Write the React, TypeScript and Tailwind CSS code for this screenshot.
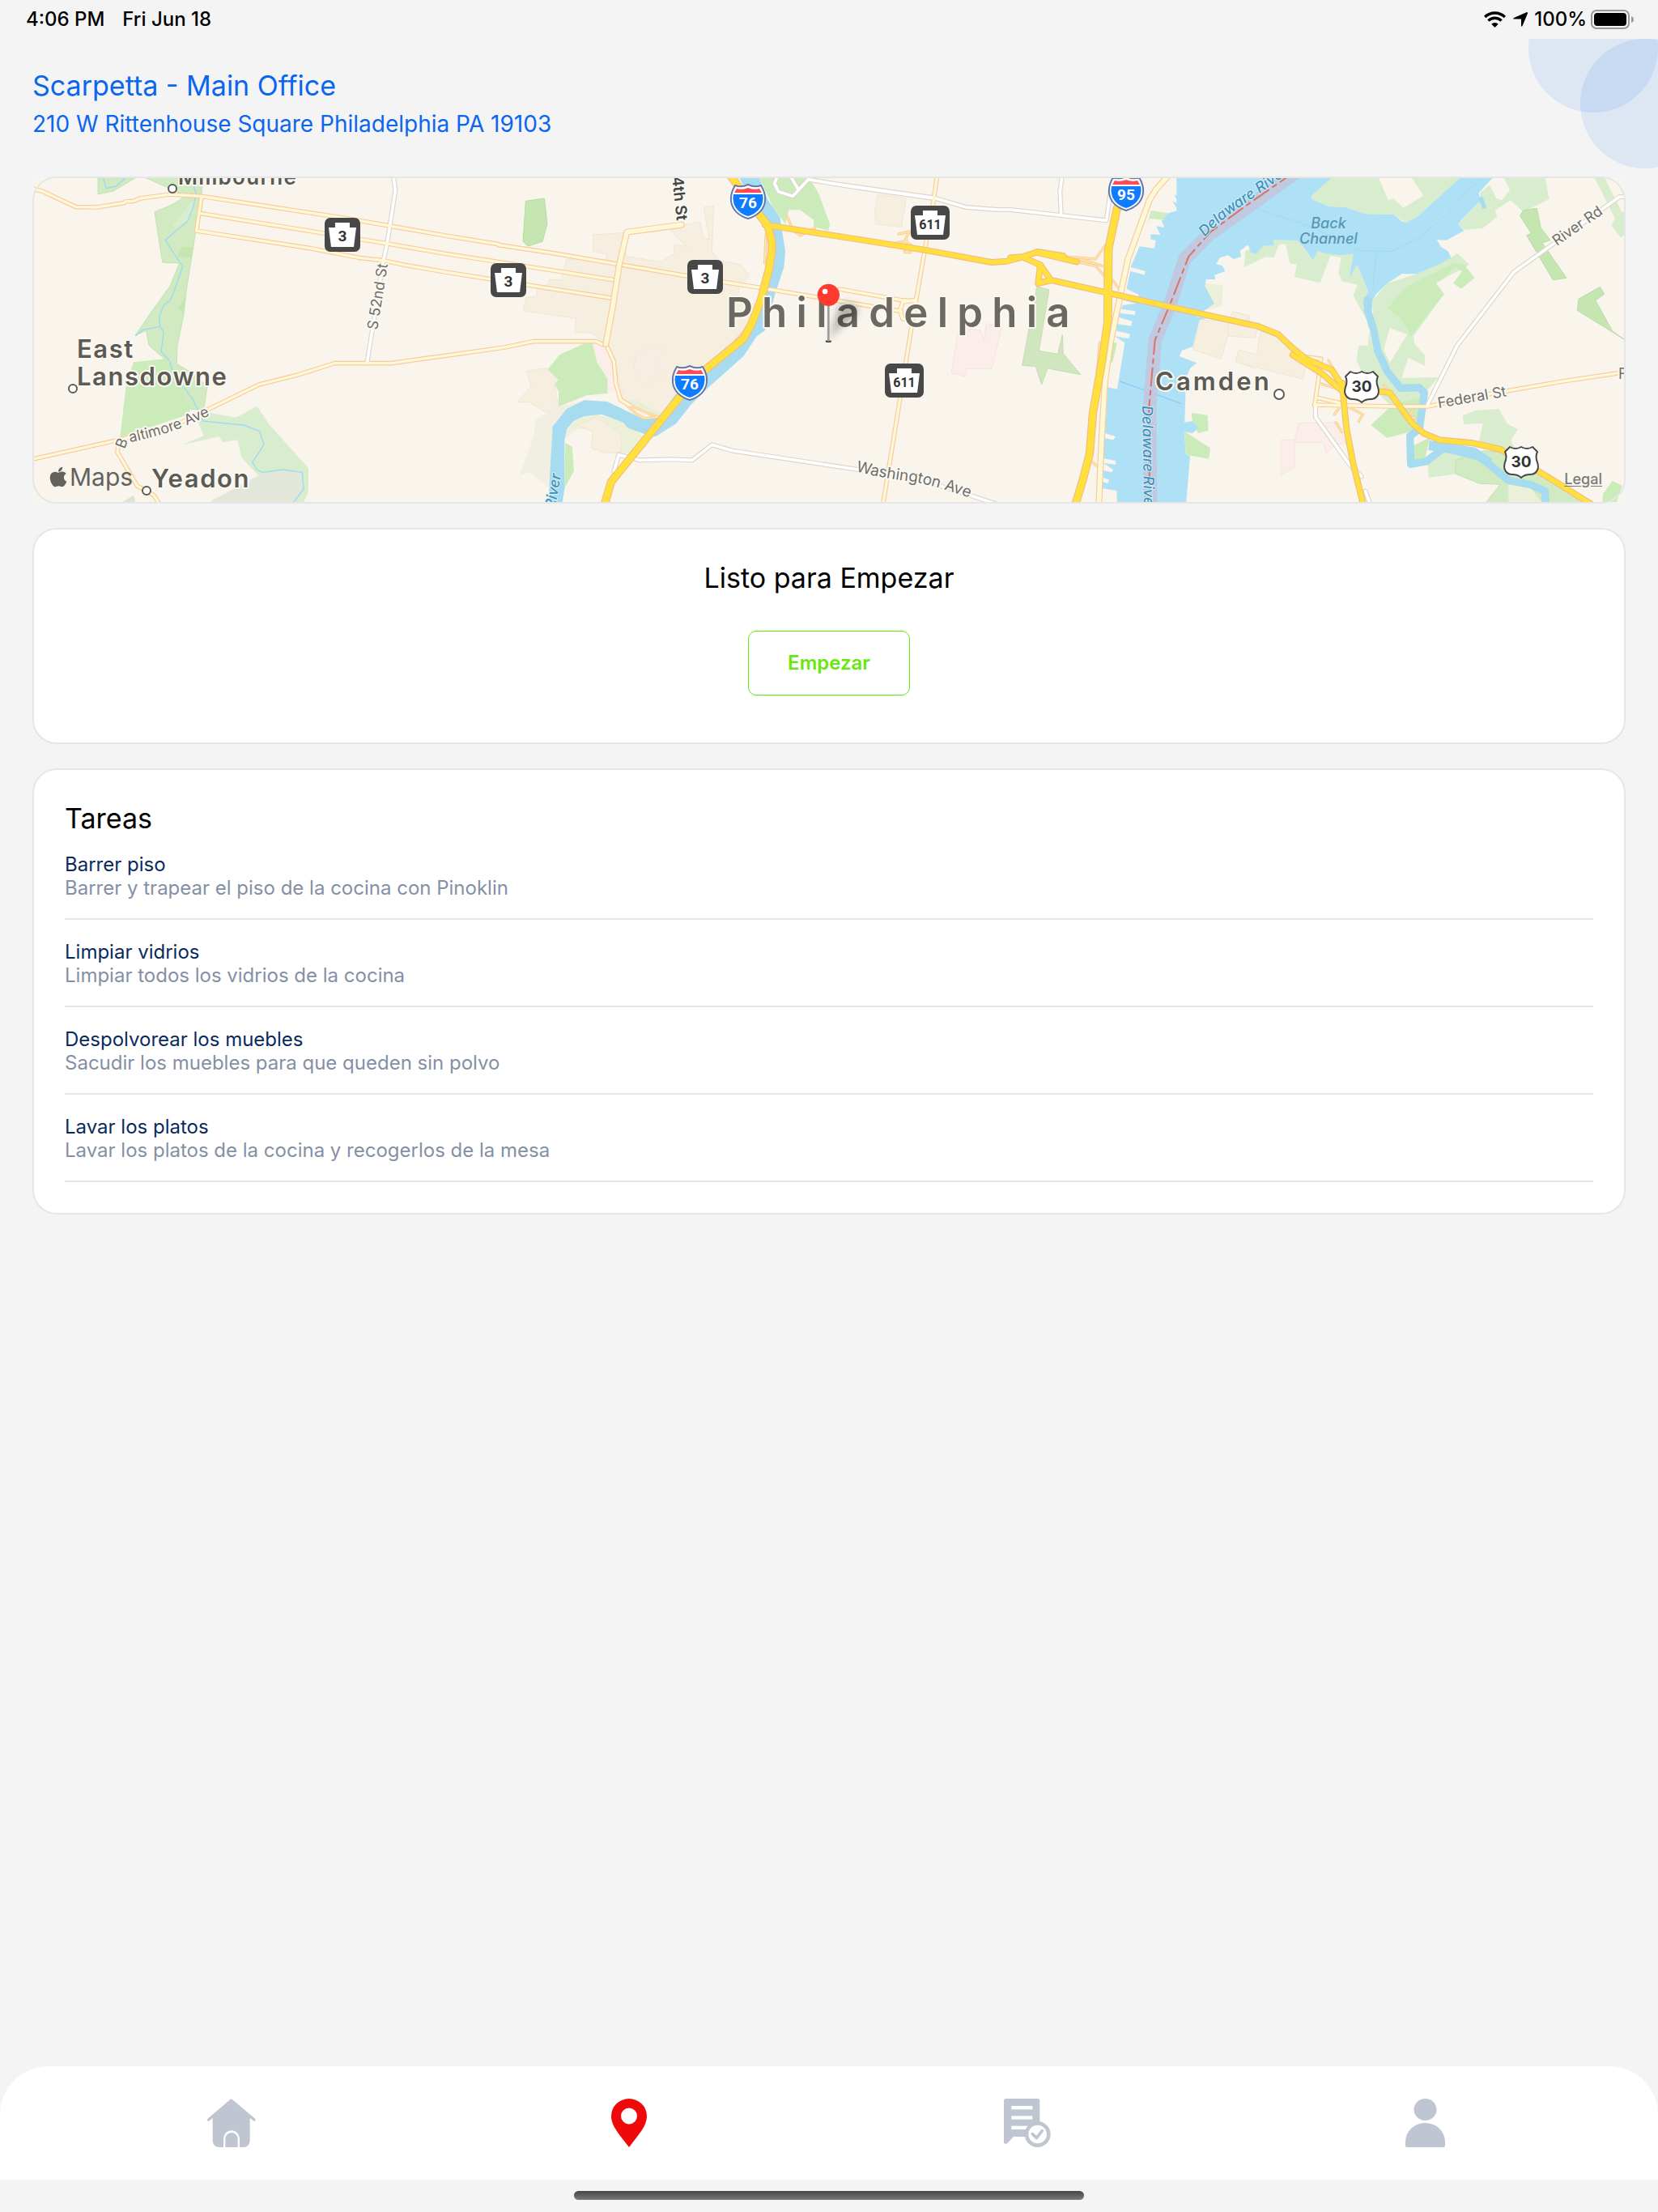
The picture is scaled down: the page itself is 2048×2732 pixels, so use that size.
import type { ReactNode } from "react";
import { FaApple } from "react-icons/fa";

/* ---------- Map data (tile-local coordinates, three units per pixel) ---------- */

const TILE = { a: -36, b: 1494, c: 2994, d: 4434 } as const;
type TileKey = keyof typeof TILE;
type Area = [TileKey, string, string, string?];

const PARK = "#cbebba";
const PARK_DARK = "#c6e6b1";
const PARK_LIGHT = "#d8edcd";
const WOOD = "#d2eac1";
const CAMPUS = "#f6efdf";
const CAMPUS_EDGE = "#efe6d4";
const HOSPITAL = "#fbedea";
const LAND = "#f9f5ed";
const WATER = "#aee1f6";
const CREEK = "#a6dbf0";

const areas: Area[] = [
  ["a", WOOD, "273,30 410,30 330,78 273,90", "#c3e2b4"],
  ["a", WOOD, "430,20 665,20 655,100 635,230 600,450 590,540 567,650 565,718 615,748 678,800 665,890 612,885 545,740 520,700 462,650 452,595 412,612 475,520 540,430 575,345 512,342 483,155 545,130 600,95", "#c3e2b4"],
  ["a", PARK_LIGHT, "548,205 610,130 635,105 625,160 600,190 565,215"],
  ["a", PARK_DARK, "585,285 625,285 620,325 565,322"],
  ["a", PARK_DARK, "598,470 592,530 568,510"],
  ["a", PARK, "405,712 520,700 550,740 615,885 610,905 355,990 378,790"],
  ["a", PARK_LIGHT, "665,895 785,917 862,875 905,940 1053,1105 1053,1190 1035,1232 700,1232 870,1135 805,1065 790,1000 735,1008 722,988 585,1018 665,985 645,935"],
  ["a", "#e3e7da", "695,1225 880,1125 960,1112 1028,1120 1038,1180 1000,1232 690,1232"],
  ["a", "#dbe5d0", "360,1232 405,1205 413,1232"],
  ["b", PARK_DARK, "328,115 397,105 408,200 390,265 337,282 318,265", "#b7dba4"],
  ["b", CAMPUS, "578,240 690,232 700,320 830,340 878,310 880,275 925,283 862,225 905,205 973,192 988,255 1008,257 988,138 1025,132 1018,300 1045,335 1125,350 1157,393 1120,435 1110,490 1200,500 1160,570 1060,665 990,745 880,850 820,910 690,850 660,720 625,645 575,605 510,600 515,550 318,522 330,472 370,470 372,430 412,425 415,405 460,408 480,330 630,330 628,310 578,303", CAMPUS_EDGE],
  ["b", "#f7eee1", "810,648 845,657 815,715 840,765 765,805 728,730 740,680", "#f4e8da"],
  ["b", CAMPUS, "333,745 403,733 450,777 435,795 450,875 405,900 343,860 298,860 348,800", CAMPUS_EDGE],
  ["b", PARK, "410,738 453,685 545,643 575,643 595,715 632,775 632,828 555,835 450,877 450,820 435,795 450,777"],
  ["b", HOSPITAL, "577,645 625,650 655,705 662,822 632,825 632,775 592,712"],
  ["b", "#f1efe1", "365,925 450,877 560,850 640,870 480,990 440,1000 410,1175 345,1120 305,1133 358,985"],
  ["b", "#ecf0d8", "475,975 520,930 590,905 680,930 765,985 710,1050 620,1048 575,1030 580,970 520,955"],
  ["b", CAMPUS, "520,945 590,915 685,980 680,1045 620,1048 570,1030 578,968", CAMPUS_EDGE],
  ["b", "#e9efd6", "690,855 740,853 830,905 800,915"],
  ["b", PARK, "475,1010 500,1025 507,1115 472,1180"],
  ["b", PARK, "1190,20 1340,20 1385,40 1415,90 1455,200 1450,225 1395,210 1395,185 1345,148 1303,148 1290,200 1240,130"],
  ["c", CAMPUS, "133,90 238,105 220,212 125,200 122,150", CAMPUS_EDGE],
  ["c", HOSPITAL, "430,600 445,585 515,595 527,632 535,568 592,585 555,737 463,737 458,765 405,752", "#f8e2df"],
  ["c", "#d0e6be", "722,432 768,443 730,670 800,682 817,610 820,680 885,758 762,735 740,795 718,728 668,724", "#c6ddb4"],
  ["c", WOOD, "1145,150 1210,160 1195,185 1140,180 1130,205"],
  ["c", PARK, "1000,640 1020,640 1003,712 988,712"],
  ["c", PARK, "1295,900 1355,908 1358,965 1320,975 1300,940"],
  ["c", PARK, "1268,968 1365,1030 1360,1070 1276,1055"],
  ["c", "#ecf0d8", "1345,420 1412,425 1408,505 1345,520"],
  ["c", CAMPUS, "1325,555 1440,560 1450,525 1510,540 1510,620 1430,615 1405,700 1300,665", CAMPUS_EDGE],
  ["c", CAMPUS, "1470,665 1540,690 1530,735 1458,710", CAMPUS_EDGE],
  ["d", PARK_LIGHT, "300,95 385,20 545,20 585,112 605,105 640,140 715,95 665,20 860,20 690,175 650,195 605,165 500,163 425,138 365,135 300,108"],
  ["d", PARK_LIGHT, "925,85 960,55 985,105 1005,112 1035,75 1010,20 1165,20 1180,108 1085,155 1038,112 980,150 988,173 935,215 865,222 843,200 925,115"],
  ["d", PARK_LIGHT, "55,300 150,258 250,262 305,335 325,300 455,310 440,400 470,350 510,450 490,490 530,670 600,770 640,797 730,815 740,790 770,768 700,850 590,870 500,780 467,705 475,650 510,650 515,575 455,465 470,425 412,412 400,380 410,325 370,318 333,418 237,397 245,350 220,345 205,275 180,275 160,325 130,322 50,360"],
  ["d", PARK_LIGHT, "525,485 580,420 690,385 818,325 840,308 885,350 760,420 790,460 678,615 682,645 720,685 720,725 658,695 635,770 770,768 730,815 640,800 590,745 555,660 530,560"],
  ["d", LAND, "590,585 655,610 590,715 568,665"],
  ["d", PARK, "582,510 655,430 830,345 865,350 905,400 855,440 825,420 858,375 835,360 762,420 792,460 668,615 630,550"],
  ["d", PARK, "520,945 600,870 710,840 700,960 580,993"],
  ["d", PARK, "680,1020 740,990 720,1070 672,1080"],
  ["d", PARK_DARK, "1085,150 1135,142 1150,215 1185,260 1155,270 1245,400 1195,407 1097,242 1115,235 1073,170", "#b7dba4"],
  ["d", PARK_DARK, "1290,478 1370,433 1385,460 1352,483 1415,597 1460,628 1285,520", "#b7dba4"],
  ["d", PARK_LIGHT, "1345,20 1382,20 1450,155 1460,155 1460,240 1445,250 1412,205 1425,180"],
  ["d", PARK_LIGHT, "860,910 910,890 995,885 1025,940 1065,960 1040,1000 1060,1050 920,1010 935,938 865,942"],
  ["d", PARK_LIGHT, "730,1085 790,1040 870,1065 840,1125 735,1140"],
  ["d", WOOD, "835,1075 940,1040 1060,1050 1330,1240 940,1240 1000,1165 925,1162 832,1125", "#c6ddb4"],
  ["d", "#ecf0d8", "1030,1165 1110,1175 1160,1240 1030,1240"],
  ["d", PARK, "1380,1200 1415,1152 1452,1170 1430,1232 1378,1232"],
  ["d", HOSPITAL, "187,1000 238,1000 252,938 400,935 425,1010 385,1020 355,1050 345,1010 237,1010 237,1102 187,1130", "#f8e2df"],
  ["d", CAMPUS, "110,600 175,605 280,720 268,775 20,712 30,667 98,683", CAMPUS_EDGE],
  ["d", CAMPUS, "-10,560 8,525 65,540 60,565 98,590 92,622 -10,615", CAMPUS_EDGE],
];

const water: Area[] = [
  ["b", CREEK, "1115,20 1190,20 1225,110 1270,175 1290,300 1285,360 1255,450 1215,595 1185,615 1135,690 1000,810 940,870 885,940 810,987 785,985 705,955 690,935 610,905 545,912 505,930 480,960 472,1000 472,1180 463,1240 412,1240 418,1120 428,950 480,885 545,853 630,858 765,923 820,920 885,830 1000,740 1140,630 1190,500 1240,350 1240,270 1200,180"],
  ["c", WATER, "1600,20 1335,20 1285,80 1245,60 1258,105 1230,90 1252,130 1225,115 1245,150 1210,160 1185,190 1195,213 1165,208 1180,240 1143,238 1145,258 1163,260 1158,290 1103,283 1070,360 1125,375 1120,388 1068,375 1055,440 1100,462 1095,475 1040,465 1035,480 1090,495 1040,500 1035,515 1088,523 1085,537 1030,530 1025,545 1075,560 1072,578 1020,570 1015,595 1068,608 1062,625 1010,615 1048,640 1020,812 985,805 975,975 1015,988 1005,1000 968,992 968,1068 1015,1078 1015,1092 968,1085 1005,1110 1000,1120 966,1112 968,1140 990,1148 985,1162 966,1155 965,1180 1018,1188 1020,1240 1275,1240 1290,1060 1275,1055 1268,970 1300,975 1322,955 1300,930 1270,935 1275,770 1290,735 1315,715 1250,690 1260,668 1300,655 1325,555 1355,550 1310,543 1350,515 1380,495 1345,430 1350,405 1385,405 1380,390 1420,375 1410,355 1387,348 1400,325 1450,310 1455,330 1480,320 1475,300 1500,280 1600,280"],
  ["d", WATER, "-200,20 385,20 300,95 300,108 365,135 425,138 500,163 605,165 635,190 650,195 690,175 860,20 980,20 920,85 925,115 860,180 843,200 865,225 800,260 765,258 780,285 805,300 818,325 760,355 690,385 635,385 580,420 540,460 525,485 525,520 495,510 490,490 510,450 470,350 440,400 455,310 410,315 355,310 325,300 305,335 285,305 250,262 150,258 120,283 95,310 75,305 65,275 30,300 30,315 10,330 -10,315 -40,280 -200,280"],
];

const streams: [TileKey, string, number, string][] = [
  ["a", "290,20 303,68 340,60 378,28", 4, "#9ad9f5"],
  ["a", "628,60 637,90 625,140 605,190 522,260 587,357 555,450 540,482 517,500 500,545 503,580 517,600 507,672 540,710 550,750 625,850 662,930 812,945 872,968 888,1018 845,1083 862,1110 884,1120 958,1110 1030,1120 1035,1182 997,1232", 4, "#9ad9f5"],
  ["a", "412,615 440,592 503,580", 4, "#9ad9f5"],
  ["d", "508,470 508,520 530,590 545,670 580,745 630,808 700,806 718,825 700,960 665,985 668,1090 725,1080 790,1030 870,1050 930,1065 970,1100 1030,1150 1110,1165 1165,1190 1168,1240", 28, CREEK],
  ["d", "735,1020 900,1045 960,1085", 36, CREEK],
  ["d", "925,100 942,142", 16, CREEK],
  ["d", "80,138 300,210 480,298 595,302 700,250 800,165 870,85 940,25", 2, "#9dd5ec"],
  ["d", "540,300 527,450", 2, "#9dd5ec"],
  ["c", "1030,783 1257,865", 4, "#8ccaf5"],
];

type RoadKind = "ramp" | "street" | "avenue" | "highway" | "freeway";
const roadStyle: Record<RoadKind, { core: string; edge: string; w: number; e: number }> = {
  street: { core: "#ffffff", edge: "#dcd6cc", w: 11, e: 18 },
  ramp: { core: "#ffe7a8", edge: "#f8cf9c", w: 4, e: 10 },
  avenue: { core: "#fef9d4", edge: "#f7caa2", w: 10, e: 17 },
  highway: { core: "#ffe03d", edge: "#f5bb84", w: 17, e: 24 },
  freeway: { core: "#ffe03d", edge: "#f5bb84", w: 24, e: 31 },
};

const roads: [TileKey, RoadKind, string][] = [
  ["a", "street", "1368,20 1375,75 1345,270 1330,340 1270,715"],
  ["b", "street", "1262,20 1250,50 1265,80 1318,97 1375,35 1560,65 1840,105"],
  ["b", "street", "1308,20 1340,75"],
  ["c", "street", "0,55 340,103 460,138 580,147 625,147 980,187 995,80"],
  ["c", "street", "816,20 808,80 812,160"],
  ["b", "street", "655,1118 673,1055 750,1075 870,1072 945,1075 1018,1018 1095,1040 1560,1110 1570,1112"],
  ["c", "street", "300,1150 465,1202 580,1240"],
  ["d", "street", "315,870 315,915 440,1090 485,1135"],
  ["d", "street", "500,1190 518,1240"],
  ["d", "street", "730,870 840,650 1050,378 1440,100 1475,97"],
  ["b", "ramp", "700,870 740,905 770,920 820,915"],
  ["b", "ramp", "715,872 790,905 820,915"],
  ["b", "ramp", "1295,168 1320,225 1345,243 1400,215"],
  ["b", "ramp", "1218,240 1214,345"],
  ["b", "ramp", "1165,570 1090,650"],
  ["c", "ramp", "210,237 250,228 233,262 260,280"],
  ["c", "ramp", "200,270 240,262 232,305 255,305"],
  ["c", "ramp", "820,320 940,330 975,280"],
  ["c", "ramp", "870,340 940,355 970,390"],
  ["c", "ramp", "830,325 900,335 965,355"],
  ["c", "ramp", "985,385 1030,445"],
  ["c", "ramp", "955,640 945,760 925,930"],
  ["c", "ramp", "925,1080 950,1100"],
  ["d", "ramp", "363,705 400,770"],
  ["d", "ramp", "412,870 385,905"],
  ["d", "ramp", "440,880 490,905 475,932"],
  ["d", "ramp", "390,935 412,970"],
  ["d", "ramp", "675,890 660,915 685,920"],
  ["d", "ramp", "568,797 590,825"],
  ["d", "ramp", "330,790 410,815"],
  ["a", "avenue", "30,70 66,78 125,106 192,137 268,138 370,122 375,117 405,115 430,105 540,90 655,97 1200,180 1560,243 1758,275"],
  ["b", "avenue", "228,278 410,305 675,350 765,365 980,402 1190,435 1340,460 1560,497 1720,523"],
  ["b", "avenue", "1490,441 1720,482 1770,486"],
  ["a", "avenue", "650,160 1330,270 1560,310 2190,408"],
  ["a", "avenue", "638,225 1060,290 1240,325 1330,335 1410,352 1560,378 2180,475"],
  ["a", "avenue", "657,97 638,225"],
  ["a", "avenue", "36,1070 350,1000 560,945 665,895 870,795 1010,760 1150,716 1360,716 1470,700 1560,688 1780,657 1885,635 2120,635 2140,645 2155,648"],
  ["a", "avenue", "350,1000 345,1045 418,1170 480,1205 503,1240"],
  ["b", "avenue", "625,645 655,710 662,790 680,852 715,872"],
  ["c", "avenue", "353,20 340,110 275,480 225,490 215,520 225,552 262,555"],
  ["c", "avenue", "275,485 262,555 210,880 152,1240"],
  ["d", "avenue", "310,870 600,876 730,876 960,830 1230,783 1440,752 1490,746"],
  ["d", "avenue", "325,845 415,865"],
  ["d", "avenue", "275,692 335,700 325,780 312,870"],
];

const wideAvenues: [TileKey, string][] = [
  ["b", "905,203 703,230 675,350 650,510 625,645"],
  ["c", "1215,15 1165,70 1140,110 1060,330 1020,520 995,640 975,780 962,1000 952,1240"],
];

const majorRoads: [TileKey, RoadKind, string][] = [
  ["b", "highway", "1215,203 1560,257 1800,295 2055,342 2110,338 2170,322 2235,352 2275,408 2485,455 2720,508 3010,572 3040,578 3115,608 3170,660 3220,700 3315,740 3355,800"],
  ["c", "highway", "625,325 670,322 725,303 820,318"],
  ["c", "highway", "720,305 870,340"],
  ["c", "highway", "735,352 727,420 775,408"],
  ["d", "highway", "230,685 340,755 415,820"],
  ["d", "highway", "415,790 420,860 430,960 455,1090 492,1240"],
  ["d", "highway", "415,800 490,812 590,825 670,935 715,975 775,1000 900,1012 1000,1035 1080,1080 1180,1140 1340,1240"],
  ["b", "freeway", "1080,10 1150,110 1225,205 1240,265 1240,300 1230,365 1200,480 1165,570 1135,625 1000,735 900,840 645,1155 620,1240"],
  ["c", "freeway", "1020,140 988,290 985,560 965,700 930,900 918,1050 895,1140 865,1240"],
  ["c", "freeway", "986,300 985,560"],
];

const toPath = (points: string) => "M" + points.split(" ").join("L");
const shift = (tile: TileKey) => `translate(${TILE[tile]} -30)`;

function Polygons({ items }: { items: Area[] }) {
  return (
    <>
      {items.map(([tile, fill, points, edge], i) => (
        <polygon key={i} transform={shift(tile)} points={points} fill={fill} stroke={edge ?? "none"} strokeWidth={3} />
      ))}
    </>
  );
}

function RoadLines({ items }: { items: [TileKey, RoadKind, string][] }) {
  return (
    <g fill="none" strokeLinejoin="round" strokeLinecap="round">
      {items.map(([tile, kind, points], i) => (
        <path key={`e${i}`} transform={shift(tile)} d={toPath(points)} stroke={roadStyle[kind].edge} strokeWidth={roadStyle[kind].e} />
      ))}
      {items.map(([tile, kind, points], i) => (
        <path key={`c${i}`} transform={shift(tile)} d={toPath(points)} stroke={roadStyle[kind].core} strokeWidth={roadStyle[kind].w} />
      ))}
    </g>
  );
}

function StateShield({ x, y, label, wide = false }: { x: number; y: number; label: string; wide?: boolean }) {
  const w = wide ? 48 : 44;
  const m = w / 2;
  return (
    <g transform={`translate(${x} ${y})`}>
      <rect width={w} height={42} rx={7} fill="#484848" />
      <path d={`M${m - 9} 6H${m + 9}V12H${w - 5}L${w - 8} 36H8L5 12H${m - 9}Z`} fill="#fff" />
      <text x={m} y={29} textAnchor="middle" fill="#333" className={wide ? "font-['Roboto',sans-serif] text-[16px] font-bold" : "font-['Roboto',sans-serif] text-[19px] font-bold"}>
        {label}
      </text>
    </g>
  );
}

function InterstateShield({ x, y, label }: { x: number; y: number; label: string }) {
  return (
    <g transform={`translate(${x} ${y})`}>
      <path d="M-16-20Q-8-17 0-21Q8-17 16-20Q22-10 21-1C20 11 10 18 0 21C-10 18-20 11-21-1Q-22-10-16-20Z" fill="#fff" stroke="#6078ab" strokeWidth={2} strokeLinejoin="round" />
      <path d="M-18-9H18Q19-4 18 0C17 9 8 16 0 18C-8 16-17 9-18 0Q-19-4-18-9Z" fill="#0f7bff" />
      <path d="M-14-16Q-7-14 0-17Q7-14 14-16L17-11H-17Z" fill="#ff4a57" />
      <text y={8} textAnchor="middle" fill="#fff" className="font-['Roboto',sans-serif] text-[19px] font-bold">
        {label}
      </text>
    </g>
  );
}

function UsShield({ x, y, label }: { x: number; y: number; label: string }) {
  return (
    <g transform={`translate(${x} ${y})`}>
      <path d="M-14-18Q-7-14 0-18Q7-14 14-18L20-12Q17-6 20 1C23 10 18 16 11 16Q4 16 0 20Q-4 16-11 16C-18 16-23 10-20 1Q-17-6-20-12Z" fill="#fff" stroke="#484848" strokeWidth={2} strokeLinejoin="round" />
      <text y={7} textAnchor="middle" fill="#333" className="text-[19px] font-bold">
        {label}
      </text>
    </g>
  );
}

function Halo({ children }: { children: ReactNode }) {
  return (
    <g stroke="#fbf8f2" strokeWidth={4} strokeLinejoin="round" className="[paint-order:stroke]">
      {children}
    </g>
  );
}

function CityMap() {
  return (
    <svg viewBox="0 0 1964 400" preserveAspectRatio="xMidYMid slice" className="block h-[400px] w-full" role="img" aria-label="Mapa de Philadelphia">
      <defs>
        <filter id="soft" x="-50%" y="-50%" width="200%" height="200%">
          <feGaussianBlur stdDeviation="14" />
        </filter>
        <path id="baltimore" d="M112 335L115 327Q150 320 178 310L222 291" />
        <path id="washington" d="M1015 362Q1050 371 1085 375Q1120 381 1175 402" />
        <path id="delaware" d="M1446 73Q1468 50 1488 37L1570-20" />
      </defs>
      <rect width={1964} height={400} fill={LAND} />
      <g transform="scale(0.33333)">
        <Polygons items={areas} />
        <Polygons items={water} />
        <g fill="none" strokeLinejoin="round">
          {streams.map(([tile, points, width, color], i) => (
            <path key={i} transform={shift(tile)} d={toPath(points)} stroke={color} strokeWidth={width} />
          ))}
          <path transform={shift("c")} d="M1680 10L1500 140L1365 235L1270 330L1215 500L1160 630L1140 880L1143 1240" stroke="#c0c9e0" strokeWidth={50} />
          <path transform={shift("c")} d="M1680 5L1500 130L1365 230L1285 320L1215 500L1160 630L1138 880L1140 1240" stroke="#dc7264" strokeWidth={6} strokeDasharray="70 14 20 14" />
        </g>
        <RoadLines items={roads} />
        <g fill="none" strokeLinejoin="round" strokeLinecap="round">
          {wideAvenues.map(([tile, points], i) => (
            <g key={i} transform={shift(tile)}>
              <path d={toPath(points)} stroke="#f7caa2" strokeWidth={24} />
              <path d={toPath(points)} stroke="#fef9d4" strokeWidth={17} />
            </g>
          ))}
        </g>
        <RoadLines items={majorRoads} />
      </g>

      <StateShield x={359} y={49} label="3" />
      <StateShield x={564} y={105} label="3" />
      <StateShield x={807} y={101} label="3" />
      <StateShield x={1083} y={34} label="611" wide />
      <StateShield x={1051} y={229} label="611" wide />
      <InterstateShield x={882} y={29} label="76" />
      <InterstateShield x={810} y={253} label="76" />
      <InterstateShield x={1349} y={19} label="95" />
      <UsShield x={1640} y={257} label="30" />
      <UsShield x={1837} y={350} label="30" />

      <Halo>
        <g fill="#6f6e69" className="text-[18px]">
          <text transform="translate(424 188) rotate(-81)">S 52nd St</text>
          <text>
            <textPath href="#baltimore">Baltimore Ave</textPath>
          </text>
          <text className="text-[19px]">
            <textPath href="#washington">Washington Ave</textPath>
          </text>
          <text transform="translate(1735 284) rotate(-10)">Federal St</text>
          <text transform="translate(1881 84) rotate(-35)">River Rd</text>
          <text x={1957} y={248}>F</text>
        </g>
        <text transform="translate(794 53) rotate(84)" textAnchor="end" fill="#454545" className="text-[19px] font-semibold">
          34th St
        </text>
      </Halo>
      <g fill="#3f93b8" stroke="#d5eefa" strokeWidth={2} className="text-[18px] font-medium italic [paint-order:stroke]">
        <text>
          <textPath href="#delaware">Delaware River</textPath>
        </text>
        <text transform="translate(1369 281) rotate(89)">Delaware River</text>
        <text transform="translate(651 366) rotate(-80)" textAnchor="end">River</text>
      </g>
      <g fill="#5797b3" textAnchor="middle" className="text-[18px] font-medium italic">
        <text x={1599} y={62}>Back</text>
        <text x={1599} y={81}>Channel</text>
      </g>

      <Halo>
        <g fill="#5c5a54" className="text-[31px] font-semibold">
          <text x={178} y={8} className="text-[26px] tracking-wider">Millbourne</text>
          <text x={53} y={222} className="tracking-wider">East</text>
          <text x={53} y={256} className="tracking-wider">Lansdowne</text>
          <text x={145} y={382} className="tracking-wider">Yeadon</text>
          <text x={1385} y={262} className="tracking-widest">Camden</text>
        </g>
        <text x={855} y={184} fill="#6c6962" className="text-[51px] font-semibold tracking-[0.22em]">
          Philadelphia
        </text>
      </Halo>
      <g fill="#fff" stroke="#5c5a54" strokeWidth={2}>
        <circle cx={171} cy={13} r={5} />
        <circle cx={48} cy={260} r={5} />
        <circle cx={139} cy={386} r={5} />
        <circle cx={1538} cy={267} r={6} />
      </g>

      <g transform="scale(0.33333)">
        <g transform={shift("b")}>
          <path d="M1452 630L1490 500Q1550 480 1560 520Q1550 560 1495 580Z" fill="#000" opacity={0.28} filter="url(#soft)" />
          <ellipse cx={1450} cy={635} rx={11} ry={4} fill="#444" />
          <path d="M1450 490V635" stroke="#9a9c9e" strokeWidth={8} />
          <circle cx={1450} cy={463} r={41} fill="#ff3a2f" />
          <circle cx={1437} cy={450} r={10} fill="#fff" />
        </g>
      </g>
    </svg>
  );
}

/* ---------- Icons ---------- */

function WifiIcon() {
  return (
    <svg viewBox="0 0 27 20" className="h-5 w-[27px]" aria-hidden="true">
      <g fill="none" stroke="#000" strokeWidth={3.4}>
        <path d="M1.2 7A17.5 17.5 0 0 1 25.8 7" />
        <path d="M5.4 11.6A11.6 11.6 0 0 1 21.6 11.6" />
      </g>
      <path d="M13.5 20L9.3 15.8A6 6 0 0 1 17.7 15.8Z" />
    </svg>
  );
}

function BatteryIcon() {
  return (
    <svg viewBox="0 0 54 24" className="h-6 w-[54px]" aria-hidden="true">
      <rect x={1} y={1} width={46} height={22} rx={6} fill="none" stroke="#999" strokeWidth={2} />
      <rect x={4} y={4} width={40} height={16} rx={4} />
      <path d="M50 8Q53 9 53 12T50 16Z" fill="#999" />
    </svg>
  );
}

function HomeIcon() {
  return (
    <svg viewBox="0 0 180 180" className="size-[60px]" fill="#c0c6d1" aria-hidden="true">
      <path d="M86 2Q89-1 92 2L179 76Q180 83 174 84L158 72V154Q158 180 132 180H120V148A30 30 0 0 0 60 148V180H46Q20 180 20 154V72L5 84Q-1 83 0 76Z" />
      <path d="M67 180V149A23 23 0 0 1 113 149V180Z" />
    </svg>
  );
}

function PinIcon() {
  return (
    <svg viewBox="0 0 44 60" className="h-[60px] w-11" fill="#f0090a" aria-hidden="true">
      <path fillRule="evenodd" d="M22 60C10 44 0 34 0 21.5A22 21.5 0 0 1 44 21.5C44 34 34 44 22 60ZM22 11.5A10 10 0 1 0 22 31.5A10 10 0 1 0 22 11.5Z" />
    </svg>
  );
}

function TasksIcon() {
  return (
    <svg viewBox="0 0 174 180" className="h-[60px] w-[58px]" aria-hidden="true">
      <path d="M8 0H125Q133 0 133 8V141H36L12 166Q0 172 0 160V8Q0 0 8 0Z" fill="#c0c6d1" />
      <g fill="#fff">
        <rect x={28} y={27} width={78} height={13} />
        <rect x={28} y={64} width={78} height={13} />
        <rect x={28} y={101} width={60} height={13} />
      </g>
      <circle cx={125} cy={132} r={48} fill="#c0c6d1" />
      <circle cx={125} cy={132} r={34} fill="#fff" />
      <path d="M106 131L121 146L142 119" fill="none" stroke="#c0c6d1" strokeWidth={11} strokeLinecap="round" strokeLinejoin="round" />
    </svg>
  );
}

function PersonIcon() {
  return (
    <svg viewBox="0 0 49 60" className="h-[60px] w-[49px]" fill="#c0c6d1" aria-hidden="true">
      <ellipse cx={24.5} cy={13.5} rx={14} ry={13.5} />
      <path d="M0 58V54C0 40 11 30 24.5 30S49 40 49 54V58Q49 60 47 60H2Q0 60 0 58Z" />
    </svg>
  );
}

/* ---------- Page ---------- */

const tasks = [
  { title: "Barrer piso", detail: "Barrer y trapear el piso de la cocina con Pinoklin" },
  { title: "Limpiar vidrios", detail: "Limpiar todos los vidrios de la cocina" },
  { title: "Despolvorear los muebles", detail: "Sacudir los muebles para que queden sin polvo" },
  { title: "Lavar los platos", detail: "Lavar los platos de la cocina y recogerlos de la mesa" },
];

const tabs = [
  { label: "Inicio", icon: <HomeIcon /> },
  { label: "Ubicación", icon: <PinIcon /> },
  { label: "Tareas", icon: <TasksIcon /> },
  { label: "Perfil", icon: <PersonIcon /> },
];

export default function App() {
  return (
    <div className="flex min-h-screen flex-col bg-[#f4f4f4] font-['Inter','Liberation_Sans',sans-serif]">
      <div className="flex h-12 items-center justify-between pr-[29px] pl-8 text-2xl font-medium text-black">
        <div className="flex gap-[22px]">
          <span>4:06 PM</span>
          <span>Fri Jun 18</span>
        </div>
        <div className="flex items-center">
          <WifiIcon />
          <svg viewBox="0 0 18 18" className="ml-[9px] size-[18px]" aria-hidden="true">
            <path d="M17 0Q18.500 0 18 1.500L11.500 17Q10.500 18.500 10 17V8.500H1Q-.5 8 1 7Z" />
          </svg>
          <span className="ml-2">100%</span>
          <span className="ml-[5px]">
            <BatteryIcon />
          </span>
        </div>
      </div>

      <div className="relative flex flex-1 flex-col">
        <div className="pointer-events-none absolute top-0 right-0 h-40 w-40 overflow-hidden" aria-hidden="true">
          <div className="absolute -top-[69px] left-0 size-40 rounded-full bg-[#1068f0]/10" />
          <div className="absolute top-0 left-16 size-40 rounded-full bg-[#1068f0]/10" />
        </div>

        <main className="flex flex-1 flex-col px-10">
          <header className="pt-9 pb-12 text-[#0b66ef]">
            <h1 className="text-[34px] leading-[44px]">Scarpetta - Main Office</h1>
            <p className="mt-2 text-[28px] leading-[34px]">210 W Rittenhouse Square Philadelphia PA 19103</p>
          </header>

          <div className="flex flex-col gap-[30px]">
            <section className="relative p-[2px]">
              <CityMap />
              <div className="pointer-events-none absolute inset-0 rounded-[30px] border-2 border-[#e6e6e6]" />
              <div className="absolute bottom-[17px] left-[18px] flex items-center text-[30px] leading-8 text-[#64625d]">
                <FaApple className="size-7" />
                <span>Maps</span>
              </div>
              <a href="#legal" className="absolute right-[29px] bottom-[18px] text-lg leading-6 font-medium text-[#7b7a76] underline underline-offset-2">
                Legal
              </a>
            </section>

            <section className="flex flex-col items-center rounded-[30px] border-2 border-[#e6e6e6] bg-white pt-[38px] pb-[58px]">
              <h2 className="text-[34px] leading-[44px] text-black">Listo para Empezar</h2>
              <button type="button" className="mt-[43px] h-20 w-[200px] rounded-[10px] border border-[#66e80c] text-2xl font-semibold text-[#66e80c]">
                Empezar
              </button>
            </section>

            <section className="rounded-[30px] border-2 border-[#e6e6e6] bg-white px-[38px] pt-[38px] pb-[38px]">
              <h2 className="text-[34px] leading-[44px] text-black">Tareas</h2>
              <ul className="mt-5 flex flex-col gap-[25px]">
                {tasks.map((task) => (
                  <li key={task.title} className="border-b-2 border-[#e5e6eb] pb-[23px] text-2xl leading-[29px]">
                    <h3 className="text-[#0a2a5e]">{task.title}</h3>
                    <p className="text-[#8490a5]">{task.detail}</p>
                  </li>
                ))}
              </ul>
            </section>
          </div>
        </main>

        <nav className="flex h-[140px] rounded-t-[60px] bg-white pr-[42px] pl-10">
          {tabs.map((tab) => (
            <button key={tab.label} type="button" aria-label={tab.label} className="flex flex-1 items-center justify-center">
              {tab.icon}
            </button>
          ))}
        </nav>
        <div className="flex h-10 justify-center pt-[14px]">
          <div className="h-[11px] w-[630px] rounded-full bg-linear-to-b from-[#464646] to-[#7a7a7a]" />
        </div>
      </div>
    </div>
  );
}
